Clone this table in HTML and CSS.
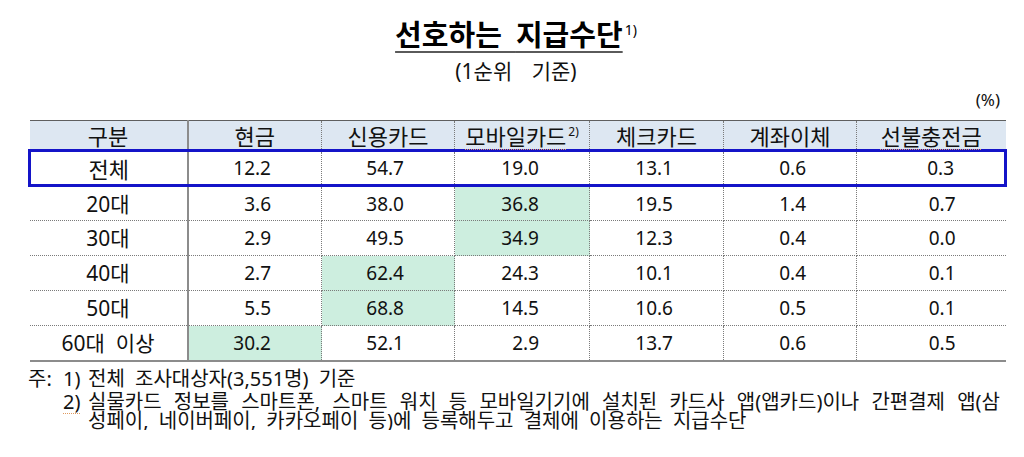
FILE: index.html
```html
<!DOCTYPE html>
<html lang="ko">
<head>
<meta charset="utf-8">
<title>선호하는 지급수단</title>
<link rel="stylesheet" href="styles.css">
</head>
<body>
<div class="page">
  <h1 class="title"><span class="title-text">선호하는 <span class="wavy">지급수단</span></span><sup class="sup">1)</sup></h1>
  <p class="subtitle">(1순위 기준)</p>
  <p class="unit">(%)</p>
  <table class="grid">
    <colgroup>
      <col class="c-label">
      <col class="c-cash">
      <col class="c-credit">
      <col class="c-mobile">
      <col class="c-check">
      <col class="c-transfer">
      <col class="c-prepaid">
    </colgroup>
    <thead>
      <tr>
        <th class="label">구분</th>
        <th>현금</th>
        <th>신용카드</th>
        <th><span class="wavy">모바일카드</span><sup class="sup-s">2)</sup></th>
        <th>체크카드</th>
        <th>계좌이체</th>
        <th><span class="wavy">선불충전금</span></th>
      </tr>
    </thead>
    <tbody>
      <tr class="total">
        <td class="label">전체</td>
        <td class="num">12.2</td>
        <td class="num">54.7</td>
        <td class="num">19.0</td>
        <td class="num">13.1</td>
        <td class="num">0.6</td>
        <td class="num">0.3</td>
      </tr>
      <tr>
        <td class="label">20대</td>
        <td class="num">3.6</td>
        <td class="num">38.0</td>
        <td class="num hl">36.8</td>
        <td class="num">19.5</td>
        <td class="num">1.4</td>
        <td class="num">0.7</td>
      </tr>
      <tr>
        <td class="label">30대</td>
        <td class="num">2.9</td>
        <td class="num">49.5</td>
        <td class="num hl">34.9</td>
        <td class="num">12.3</td>
        <td class="num">0.4</td>
        <td class="num">0.0</td>
      </tr>
      <tr>
        <td class="label">40대</td>
        <td class="num">2.7</td>
        <td class="num hl">62.4</td>
        <td class="num">24.3</td>
        <td class="num">10.1</td>
        <td class="num">0.4</td>
        <td class="num">0.1</td>
      </tr>
      <tr>
        <td class="label">50대</td>
        <td class="num">5.5</td>
        <td class="num hl">68.8</td>
        <td class="num">14.5</td>
        <td class="num">10.6</td>
        <td class="num">0.5</td>
        <td class="num">0.1</td>
      </tr>
      <tr class="last">
        <td class="label">60대&nbsp; 이상</td>
        <td class="num hl">30.2</td>
        <td class="num">52.1</td>
        <td class="num">2.9</td>
        <td class="num">13.7</td>
        <td class="num">0.6</td>
        <td class="num">0.5</td>
      </tr>
    </tbody>
  </table>
  <div class="notes">
    <div class="note first">
      <span class="lead">주:</span>
      <span class="no">1)</span>
      <span class="body">전체 조사대상자(3,551명) 기준</span>
    </div>
    <div class="note">
      <span class="lead"></span>
      <span class="no"><span class="wavy">2)</span></span>
      <span class="body">
        <span class="line justified">실물카드 정보를 스마트폰, 스마트 워치 등 모바일기기에 설치된 카드사 앱(앱카드)이나 간편결제 앱(삼</span>
        <span class="line">성페이, 네이버페이, 카카오페이 등)에 등록해두고 결제에 이용하는 지급수단</span>
      </span>
    </div>
  </div>
</div>
</body>
</html>
```

FILE: styles.css
```css
html, body {
  margin: 0;
  padding: 0;
  background: #ffffff;
}

body {
  font-family: "Noto Sans", "Noto Sans CJK KR", sans-serif;
  color: #111111;
}

.page {
  width: 976px;
  padding: 18px 20px 0 28px;
}

.title {
  margin: 0;
  text-align: center;
  font-family: "Noto Sans CJK KR", sans-serif;
  font-size: 29px;
  font-weight: 700;
  line-height: 30px;
  color: #000;
}

.title-text {
  word-spacing: 6px;
  text-decoration: underline;
  text-decoration-color: #5a5a5a;
  text-decoration-thickness: 2px;
  text-underline-offset: 5px;
}

.sup {
  font-family: "Noto Sans", sans-serif;
  font-size: 14px;
  font-weight: 400;
  vertical-align: 11px;
  line-height: 0;
  margin-left: 2px;
}

.subtitle {
  margin: 11px 0 0;
  text-align: center;
  font-size: 21px;
  line-height: 24px;
  word-spacing: 14px;
}

.unit {
  margin: 7px 0 0;
  text-align: right;
  padding-right: 4px;
  font-size: 17px;
  line-height: 20px;
}

.grid {
  margin-top: 10px;
  width: 976px;
  table-layout: fixed;
  border-collapse: collapse;
  border-top: 1px solid #5f5f5f;
}

.c-label { width: 158px; }
.c-cash { width: 134px; }
.c-credit { width: 133px; }
.c-mobile { width: 135px; }
.c-check { width: 134px; }
.c-transfer { width: 133px; }
.c-prepaid { width: 149px; }

.grid th,
.grid td {
  padding: 0;
  border-right: 1px dotted #7a7a7a;
  border-bottom: 1px dotted #7a7a7a;
  white-space: nowrap;
  vertical-align: middle;
}

.grid th:last-child,
.grid td:last-child {
  border-right: none;
}

.grid .label {
  border-right: 2px solid #8c8c8c;
  text-align: center;
}

.grid thead tr {
  height: 30px;
}

.grid th {
  background: #dde7f2;
  font-family: "Noto Sans CJK KR", sans-serif;
  font-weight: 400;
  font-size: 22px;
  line-height: 26px;
  text-align: center;
}

.grid tbody tr {
  height: 35px;
}

.grid td {
  font-size: 19px;
  line-height: 24px;
}

.grid td.label {
  font-size: 21px;
}

.grid td.num {
  text-align: right;
  padding-right: 50px;
}

.grid td.hl {
  background: #cdeedf;
}

.grid tr.total td {
  border-top: 3px solid #1414c8;
  border-bottom: 3px solid #1414c8;
}

.grid tr.total td:first-child {
  border-left: 3px solid #1414c8;
  font-family: "Noto Sans CJK KR", sans-serif;
  font-size: 22px;
}

.grid tr.total td:last-child {
  border-right: 3px solid #1414c8;
}

.grid tr.last td {
  border-bottom: 2px solid #8c8c8c;
}

.sup-s {
  font-family: "Noto Sans", sans-serif;
  font-size: 12px;
  vertical-align: 9px;
  line-height: 0;
  margin-left: 2px;
}

.wavy {
  text-decoration: underline dotted #e09a60;
  text-decoration-thickness: 1px;
  text-underline-offset: 4px;
}

.title .wavy {
  text-decoration: none;
}

.notes {
  margin-top: 6px;
  font-size: 20px;
}

.note {
  display: flex;
  align-items: flex-start;
}

.note.first {
  line-height: 22px;
}

.note + .note {
  margin-top: 2px;
  line-height: 19px;
}

.lead {
  flex: 0 0 35px;
}

.no {
  flex: 0 0 25px;
}

.body {
  flex: 0 0 912px;
  word-spacing: 5px;
}

.line {
  display: block;
}

.line.justified {
  text-align: justify;
  text-align-last: justify;
  word-spacing: 0;
}
```
